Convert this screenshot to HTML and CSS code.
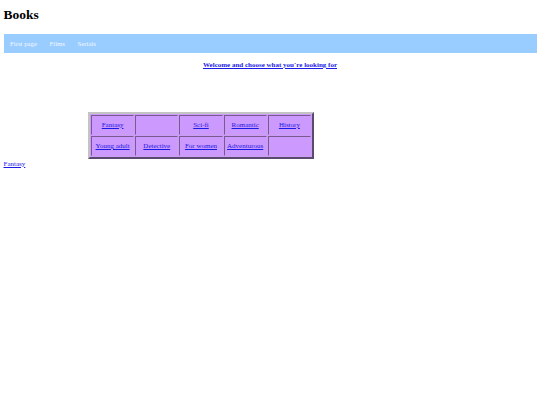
FILE: index.html
```html
<!DOCTYPE html>
<html>
<head>
<meta charset="utf-8">
<title>Books</title>
<link rel="stylesheet" href="styles.css">
</head>
<body>
<h1 class="title">Books</h1>
<nav class="menu">
  <a href="#" class="menu-link">First page</a>
  <a href="#" class="menu-link">Films</a>
  <a href="#" class="menu-link">Serials</a>
</nav>
<p class="welcome"><a href="#">Welcome and choose what you`re looking for</a></p>
<table class="genres">
  <tr>
    <td><a href="#">Fantasy</a></td>
    <td></td>
    <td><a href="#">Sci-fi</a></td>
    <td><a href="#">Romantic</a></td>
    <td><a href="#">History</a></td>
  </tr>
  <tr>
    <td><a href="#">Young adult</a></td>
    <td><a href="#">Detective</a></td>
    <td><a href="#">For women</a></td>
    <td><a href="#">Adventurous</a></td>
    <td></td>
  </tr>
</table>
<a href="#" class="bottom-link">Fantasy</a>
</body>
</html>
```
FILE: styles.css
```css
html {
  font-family: "Liberation Serif", "Times New Roman", serif;
  font-size: 7px;
}
body {
  margin: 0;
  padding: 0 3.5px;
  background: #fff;
}
a {
  color: #1a1ae6;
}
.title {
  font-size: 13.5px;
  font-weight: bold;
  margin: 7px 0 0;
  line-height: 16px;
}
.menu {
  margin-top: 11px;
  background: #99ccff;
  height: 19px;
  display: flex;
  align-items: center;
  padding-left: 6.5px;
  gap: 12.5px;
  font-size: 6.8px;
}
.menu-link {
  color: #f4f8ff;
  text-decoration: none;
}
.welcome {
  margin: 8px 0 0;
  text-align: center;
  font-weight: bold;
  line-height: 9px;
}
.genres {
  margin: 42px 0 0 84.5px;
  background: #cc99ff;
  border: 2px solid;
  border-color: #c4c4c4 #5a4a6e #5a4a6e #c4c4c4;
  border-spacing: 1px;
  width: 226px;
}
.genres td {
  border: 1px solid;
  border-color: #7a5a8e #c8a0ee #c8a0ee #7a5a8e;
  width: 20%;
  height: 18px;
  text-align: center;
  padding: 0;
  font-size: 7px;
  font-weight: normal;
}
.bottom-link {
  display: block;
  margin-top: 1px;
  line-height: 9px;
}
```
